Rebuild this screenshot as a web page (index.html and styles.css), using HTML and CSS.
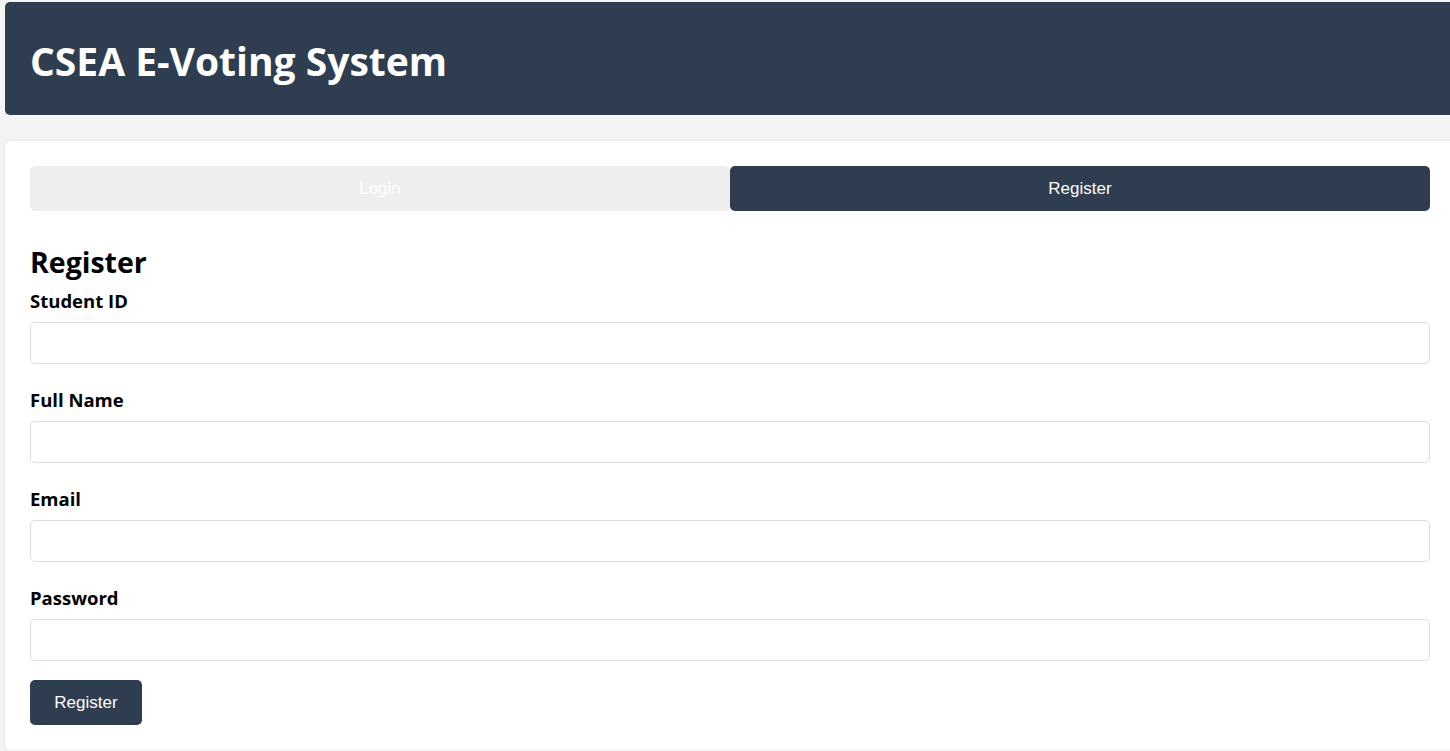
FILE: index.html
```html
<!DOCTYPE html>
<html>
<head>
<meta charset="utf-8">
<link rel="stylesheet" href="styles.css">
</head>
<body>
<div class="page">
  <header class="header">
    <h1 class="title">CSEA E-Voting System</h1>
  </header>
  <main class="card">
    <div class="tabs">
      <button class="tab">Login</button>
      <button class="tab active">Register</button>
    </div>
    <h2 class="form-title">Register</h2>
    <form class="form">
      <div class="group">
        <label class="label">Student ID</label>
        <input class="input" type="text">
      </div>
      <div class="group">
        <label class="label">Full Name</label>
        <input class="input" type="text">
      </div>
      <div class="group">
        <label class="label">Email</label>
        <input class="input" type="email">
      </div>
      <div class="group">
        <label class="label">Password</label>
        <input class="input" type="password">
      </div>
      <button class="submit" type="button">Register</button>
    </form>
  </main>
</div>
</body>
</html>
```
FILE: styles.css
```css
html, body {
  margin: 0;
  padding: 0;
  overflow: hidden;
  background: #f4f4f4;
}
body {
  font-family: "Open Sans", "Noto Sans", sans-serif;
  color: #000;
}
.page {
  width: 1450px;
  padding: 2px 0 0 5px;
}
.header {
  height: 113px;
  box-sizing: border-box;
  padding: 0 25px;
  background: #2e3d50;
  border-radius: 5px;
  display: flex;
  align-items: center;
  margin-bottom: 26px;
}
.title {
  margin: 0;
  color: #fff;
  font-size: 39px;
  font-weight: 700;
  line-height: 50px;
  padding-top: 4px;
}
.card {
  background: #fff;
  border-radius: 5px;
  padding: 25px;
  box-shadow: 0 0 4px rgba(0,0,0,0.1);
}
.tabs {
  display: flex;
  height: 45px;
}
.tab {
  flex: 1;
  border: none;
  background: #eeeeee;
  color: #fff;
  font-family: "Liberation Sans", Arial, sans-serif;
  font-size: 17px;
  border-radius: 5px;
  padding: 0;
}
.tab.active {
  background: #2e3d50;
}
.form-title {
  margin: 33px 0 0;
  font-size: 28.5px;
  line-height: 36px;
  font-weight: 700;
}
.form {
  display: flex;
  flex-direction: column;
  align-items: flex-start;
  margin-top: 10px;
}
.group {
  display: flex;
  flex-direction: column;
  width: 100%;
  margin-bottom: 25px;
}
.group:last-of-type {
  margin-bottom: 19px;
}
.label {
  font-size: 18.5px;
  line-height: 22px;
  font-weight: 700;
  margin-bottom: 10px;
}
.input {
  height: 42px;
  box-sizing: border-box;
  border: 1px solid #dddddd;
  border-radius: 5px;
  margin: 0;
}
.submit {
  width: 112px;
  height: 45px;
  border: none;
  border-radius: 5px;
  background: #2e3d50;
  color: #fff;
  font-family: "Liberation Sans", Arial, sans-serif;
  font-size: 17px;
  padding: 0;
}
```
